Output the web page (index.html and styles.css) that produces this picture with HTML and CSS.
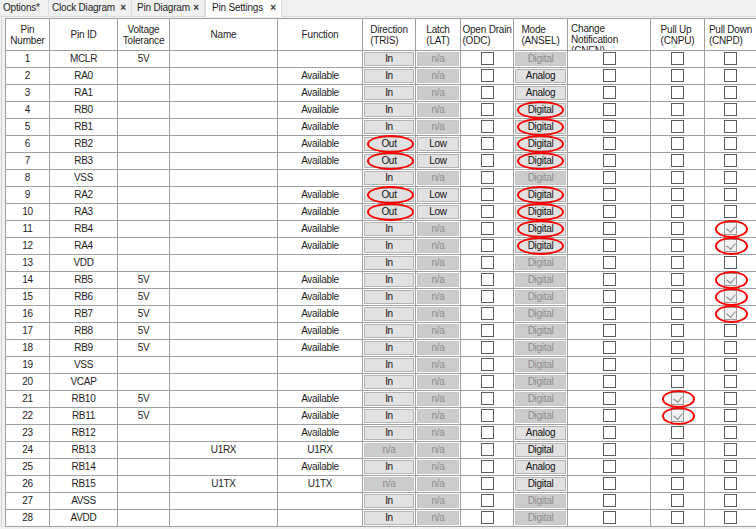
FILE: index.html
```html
<!DOCTYPE html>
<html lang="en">
<head>
  <meta charset="UTF-8">
  <title>Pin Settings</title>
  <link rel="stylesheet" href="styles.css">
</head>
<body>
  <!-- tab strip -->
  <div class="tabs">
    <div class="tab t1">Options*</div>
    <div class="tab t2">Clock Diagram<span class="x">×</span></div>
    <div class="tab t3">Pin Diagram<span class="x">×</span></div>
    <div class="tab t4 active">Pin Settings<span class="x">×</span></div>
  </div>

  <!-- pin table -->
  <div class="panel">
    <table class="pins">
      <colgroup>
        <col style="width:44px"><col style="width:68px"><col style="width:52px"><col style="width:108px">
        <col style="width:85px"><col style="width:53px"><col style="width:45px"><col style="width:53px">
        <col style="width:54px"><col style="width:83px"><col style="width:54px"><col style="width:52px">
      </colgroup>
      <thead>
        <tr>
          <th><div class="hd mid">Pin<br>Number</div></th>
          <th><div class="hd mid">Pin ID</div></th>
          <th><div class="hd mid">Voltage<br>Tolerance</div></th>
          <th><div class="hd mid">Name</div></th>
          <th><div class="hd mid">Function</div></th>
          <th><div class="hd"><span>Direction<br>(TRIS)</span></div></th>
          <th><div class="hd"><span>Latch<br>(LAT)</span></div></th>
          <th><div class="hd"><span>Open Drain<br>(ODC)</span></div></th>
          <th><div class="hd"><span>Mode<br>(ANSEL)</span></div></th>
          <th><div class="hd top"><span>Change<br>Notification<br>(CNEN)</span></div></th>
          <th><div class="hd"><span>Pull Up<br>(CNPU)</span></div></th>
          <th><div class="hd"><span>Pull Down<br>(CNPD)</span></div></th>
        </tr>
      </thead>
      <tbody>
        <tr><td>1</td><td>MCLR</td><td>5V</td><td></td><td></td>
          <td class="b"><span class="btn">In</span></td><td class="b"><span class="btn off">n/a</span></td><td><span class="cb"></span></td><td class="b"><span class="btn off">Digital</span></td><td><span class="cb"></span></td><td><span class="cb"></span></td><td><span class="cb"></span></td></tr>
        <tr><td>2</td><td>RA0</td><td></td><td></td><td>Available</td>
          <td class="b"><span class="btn">In</span></td><td class="b"><span class="btn off">n/a</span></td><td><span class="cb"></span></td><td class="b"><span class="btn">Analog</span></td><td><span class="cb"></span></td><td><span class="cb"></span></td><td><span class="cb"></span></td></tr>
        <tr><td>3</td><td>RA1</td><td></td><td></td><td>Available</td>
          <td class="b"><span class="btn">In</span></td><td class="b"><span class="btn off">n/a</span></td><td><span class="cb"></span></td><td class="b"><span class="btn">Analog</span></td><td><span class="cb"></span></td><td><span class="cb"></span></td><td><span class="cb"></span></td></tr>
        <tr><td>4</td><td>RB0</td><td></td><td></td><td>Available</td>
          <td class="b"><span class="btn">In</span></td><td class="b"><span class="btn off">n/a</span></td><td><span class="cb"></span></td><td class="b mk"><span class="btn">Digital</span><i class="ring"></i></td><td><span class="cb"></span></td><td><span class="cb"></span></td><td><span class="cb"></span></td></tr>
        <tr><td>5</td><td>RB1</td><td></td><td></td><td>Available</td>
          <td class="b"><span class="btn">In</span></td><td class="b"><span class="btn off">n/a</span></td><td><span class="cb"></span></td><td class="b mk"><span class="btn">Digital</span><i class="ring"></i></td><td><span class="cb"></span></td><td><span class="cb"></span></td><td><span class="cb"></span></td></tr>
        <tr><td>6</td><td>RB2</td><td></td><td></td><td>Available</td>
          <td class="b mk"><span class="btn">Out</span><i class="ring dir"></i></td><td class="b"><span class="btn">Low</span></td><td><span class="cb"></span></td><td class="b mk"><span class="btn">Digital</span><i class="ring"></i></td><td><span class="cb"></span></td><td><span class="cb"></span></td><td><span class="cb"></span></td></tr>
        <tr><td>7</td><td>RB3</td><td></td><td></td><td>Available</td>
          <td class="b mk"><span class="btn">Out</span><i class="ring dir"></i></td><td class="b"><span class="btn">Low</span></td><td><span class="cb"></span></td><td class="b mk"><span class="btn">Digital</span><i class="ring"></i></td><td><span class="cb"></span></td><td><span class="cb"></span></td><td><span class="cb"></span></td></tr>
        <tr><td>8</td><td>VSS</td><td></td><td></td><td></td>
          <td class="b"><span class="btn">In</span></td><td class="b"><span class="btn off">n/a</span></td><td><span class="cb"></span></td><td class="b"><span class="btn off">Digital</span></td><td><span class="cb"></span></td><td><span class="cb"></span></td><td><span class="cb"></span></td></tr>
        <tr><td>9</td><td>RA2</td><td></td><td></td><td>Available</td>
          <td class="b mk"><span class="btn">Out</span><i class="ring dir"></i></td><td class="b"><span class="btn">Low</span></td><td><span class="cb"></span></td><td class="b mk"><span class="btn">Digital</span><i class="ring"></i></td><td><span class="cb"></span></td><td><span class="cb"></span></td><td><span class="cb"></span></td></tr>
        <tr><td>10</td><td>RA3</td><td></td><td></td><td>Available</td>
          <td class="b mk"><span class="btn">Out</span><i class="ring dir"></i></td><td class="b"><span class="btn">Low</span></td><td><span class="cb"></span></td><td class="b mk"><span class="btn">Digital</span><i class="ring"></i></td><td><span class="cb"></span></td><td><span class="cb"></span></td><td><span class="cb"></span></td></tr>
        <tr><td>11</td><td>RB4</td><td></td><td></td><td>Available</td>
          <td class="b"><span class="btn">In</span></td><td class="b"><span class="btn off">n/a</span></td><td><span class="cb"></span></td><td class="b mk"><span class="btn">Digital</span><i class="ring"></i></td><td><span class="cb"></span></td><td><span class="cb"></span></td><td class="mk"><span class="cb on"></span><i class="ring sm"></i></td></tr>
        <tr><td>12</td><td>RA4</td><td></td><td></td><td>Available</td>
          <td class="b"><span class="btn">In</span></td><td class="b"><span class="btn off">n/a</span></td><td><span class="cb"></span></td><td class="b mk"><span class="btn">Digital</span><i class="ring"></i></td><td><span class="cb"></span></td><td><span class="cb"></span></td><td class="mk"><span class="cb on"></span><i class="ring sm"></i></td></tr>
        <tr><td>13</td><td>VDD</td><td></td><td></td><td></td>
          <td class="b"><span class="btn">In</span></td><td class="b"><span class="btn off">n/a</span></td><td><span class="cb"></span></td><td class="b"><span class="btn off">Digital</span></td><td><span class="cb"></span></td><td><span class="cb"></span></td><td><span class="cb"></span></td></tr>
        <tr><td>14</td><td>RB5</td><td>5V</td><td></td><td>Available</td>
          <td class="b"><span class="btn">In</span></td><td class="b"><span class="btn off">n/a</span></td><td><span class="cb"></span></td><td class="b"><span class="btn off">Digital</span></td><td><span class="cb"></span></td><td><span class="cb"></span></td><td class="mk"><span class="cb on"></span><i class="ring sm"></i></td></tr>
        <tr><td>15</td><td>RB6</td><td>5V</td><td></td><td>Available</td>
          <td class="b"><span class="btn">In</span></td><td class="b"><span class="btn off">n/a</span></td><td><span class="cb"></span></td><td class="b"><span class="btn off">Digital</span></td><td><span class="cb"></span></td><td><span class="cb"></span></td><td class="mk"><span class="cb on"></span><i class="ring sm"></i></td></tr>
        <tr><td>16</td><td>RB7</td><td>5V</td><td></td><td>Available</td>
          <td class="b"><span class="btn">In</span></td><td class="b"><span class="btn off">n/a</span></td><td><span class="cb"></span></td><td class="b"><span class="btn off">Digital</span></td><td><span class="cb"></span></td><td><span class="cb"></span></td><td class="mk"><span class="cb on"></span><i class="ring sm"></i></td></tr>
        <tr><td>17</td><td>RB8</td><td>5V</td><td></td><td>Available</td>
          <td class="b"><span class="btn">In</span></td><td class="b"><span class="btn off">n/a</span></td><td><span class="cb"></span></td><td class="b"><span class="btn off">Digital</span></td><td><span class="cb"></span></td><td><span class="cb"></span></td><td><span class="cb"></span></td></tr>
        <tr><td>18</td><td>RB9</td><td>5V</td><td></td><td>Available</td>
          <td class="b"><span class="btn">In</span></td><td class="b"><span class="btn off">n/a</span></td><td><span class="cb"></span></td><td class="b"><span class="btn off">Digital</span></td><td><span class="cb"></span></td><td><span class="cb"></span></td><td><span class="cb"></span></td></tr>
        <tr><td>19</td><td>VSS</td><td></td><td></td><td></td>
          <td class="b"><span class="btn">In</span></td><td class="b"><span class="btn off">n/a</span></td><td><span class="cb"></span></td><td class="b"><span class="btn off">Digital</span></td><td><span class="cb"></span></td><td><span class="cb"></span></td><td><span class="cb"></span></td></tr>
        <tr><td>20</td><td>VCAP</td><td></td><td></td><td></td>
          <td class="b"><span class="btn">In</span></td><td class="b"><span class="btn off">n/a</span></td><td><span class="cb"></span></td><td class="b"><span class="btn off">Digital</span></td><td><span class="cb"></span></td><td><span class="cb"></span></td><td><span class="cb"></span></td></tr>
        <tr><td>21</td><td>RB10</td><td>5V</td><td></td><td>Available</td>
          <td class="b"><span class="btn">In</span></td><td class="b"><span class="btn off">n/a</span></td><td><span class="cb"></span></td><td class="b"><span class="btn off">Digital</span></td><td><span class="cb"></span></td><td class="mk"><span class="cb on"></span><i class="ring sm"></i></td><td><span class="cb"></span></td></tr>
        <tr><td>22</td><td>RB11</td><td>5V</td><td></td><td>Available</td>
          <td class="b"><span class="btn">In</span></td><td class="b"><span class="btn off">n/a</span></td><td><span class="cb"></span></td><td class="b"><span class="btn off">Digital</span></td><td><span class="cb"></span></td><td class="mk"><span class="cb on"></span><i class="ring sm"></i></td><td><span class="cb"></span></td></tr>
        <tr><td>23</td><td>RB12</td><td></td><td></td><td>Available</td>
          <td class="b"><span class="btn">In</span></td><td class="b"><span class="btn off">n/a</span></td><td><span class="cb"></span></td><td class="b"><span class="btn">Analog</span></td><td><span class="cb"></span></td><td><span class="cb"></span></td><td><span class="cb"></span></td></tr>
        <tr><td>24</td><td>RB13</td><td></td><td>U1RX</td><td>U1RX</td>
          <td class="b"><span class="btn off">n/a</span></td><td class="b"><span class="btn off">n/a</span></td><td><span class="cb"></span></td><td class="b"><span class="btn">Digital</span></td><td><span class="cb"></span></td><td><span class="cb"></span></td><td><span class="cb"></span></td></tr>
        <tr><td>25</td><td>RB14</td><td></td><td></td><td>Available</td>
          <td class="b"><span class="btn">In</span></td><td class="b"><span class="btn off">n/a</span></td><td><span class="cb"></span></td><td class="b"><span class="btn">Analog</span></td><td><span class="cb"></span></td><td><span class="cb"></span></td><td><span class="cb"></span></td></tr>
        <tr><td>26</td><td>RB15</td><td></td><td>U1TX</td><td>U1TX</td>
          <td class="b"><span class="btn off">n/a</span></td><td class="b"><span class="btn off">n/a</span></td><td><span class="cb"></span></td><td class="b"><span class="btn">Digital</span></td><td><span class="cb"></span></td><td><span class="cb"></span></td><td><span class="cb"></span></td></tr>
        <tr><td>27</td><td>AVSS</td><td></td><td></td><td></td>
          <td class="b"><span class="btn">In</span></td><td class="b"><span class="btn off">n/a</span></td><td><span class="cb"></span></td><td class="b"><span class="btn off">Digital</span></td><td><span class="cb"></span></td><td><span class="cb"></span></td><td><span class="cb"></span></td></tr>
        <tr><td>28</td><td>AVDD</td><td></td><td></td><td></td>
          <td class="b"><span class="btn">In</span></td><td class="b"><span class="btn off">n/a</span></td><td><span class="cb"></span></td><td class="b"><span class="btn off">Digital</span></td><td><span class="cb"></span></td><td><span class="cb"></span></td><td><span class="cb"></span></td></tr>
      </tbody>
    </table>
  </div>
</body>
</html>
```

FILE: styles.css
```css
/* page */
body {
  margin: 0;
  width: 756px;
  height: 529px;
  overflow: hidden;
  background: #f0f0f0;
  font-family: "Liberation Sans", Arial, sans-serif;
  color: #1e1e1e;
}

/* tab strip */
.tabs {
  display: flex;
  height: 17px;
  box-sizing: border-box;
  border-bottom: 1px solid #dcdcdc;
}

.tab {
  box-sizing: border-box;
  display: flex;
  justify-content: space-between;
  height: 16px;
  padding: 0 5px 0 3px;
  font-size: 10px;
  letter-spacing: -0.2px;
  line-height: 16px;
  white-space: nowrap;
  border-right: 1px solid #dcdcdc;
}

.t1 { width: 49px; }
.t2 { width: 83px; }
.t3 { width: 73px; padding-left: 5px; }
.t4 { width: 77px; padding-left: 6px; }

.tab.active {
  background: #fff;
  height: 17px;
  border-left: 1px solid #dcdcdc;
}

.x {
  font-size: 10px;
  font-weight: bold;
  color: #333;
}

/* table area */
.panel {
  padding: 1px 0 0 3px;
  border-left: 1px solid #d4d4d4;
  margin-left: 1px;
}

.pins {
  border-collapse: collapse;
  table-layout: fixed;
  width: 751px;
  background: #fff;
}

.pins th,
.pins td {
  border: 1px solid #a0a0a0;
  padding: 0;
  text-align: center;
  white-space: nowrap;
  overflow: hidden;
}

.pins th {
  font-weight: normal;
  font-size: 10px;
  letter-spacing: -0.2px;
}

.hd {
  display: flex;
  align-items: center;
  justify-content: center;
  height: 31px;
  line-height: 11px;
  text-align: left;
  overflow: hidden;
}

.hd.mid { text-align: center; }

.hd.top {
  align-items: flex-start;
  justify-content: flex-start;
  padding: 4px 0 0 3px;
  box-sizing: border-box;
}

.pins td {
  font-size: 10px;
  letter-spacing: -0.3px;
  line-height: 16px;
}

/* cell buttons */
.pins td.b {
  padding: 1px;
}

.btn {
  display: block;
  box-sizing: border-box;
  height: 14px;
  line-height: 12px;
  background: #e1e1e1;
  border: 1px solid #b4b4b4;
  color: #111;
}

.btn.off {
  background: #cccccc;
  border-color: #c4c4c4;
  color: #8c8c8c;
}

/* check boxes */
.cb {
  display: block;
  margin: 1px auto 2px;
  width: 13px;
  height: 13px;
  box-sizing: border-box;
  border: 1px solid #5c5c5c;
  background: #fff;
  position: relative;
}

.cb.on {
  border-color: #9a9a9a;
  background: #f2f2f2;
}

.cb.on::after {
  content: "";
  position: absolute;
  left: 3px;
  top: 1px;
  width: 5px;
  height: 7px;
  border: solid #8a8a8a;
  border-width: 0 1px 1px 0;
  transform: rotate(40deg);
}

/* red annotation rings */
.pins td.mk {
  position: relative;
  overflow: visible;
}

.ring {
  position: absolute;
  left: 3px;
  right: 3px;
  top: -1px;
  bottom: -1px;
  border: 2.5px solid #f00;
  border-radius: 50%;
}

.ring.dir {
  left: 4px;
  right: 1px;
}

.ring.sm {
  left: 50%;
  right: auto;
  width: 33px;
  margin-left: -16px;
  box-sizing: border-box;
}
```
